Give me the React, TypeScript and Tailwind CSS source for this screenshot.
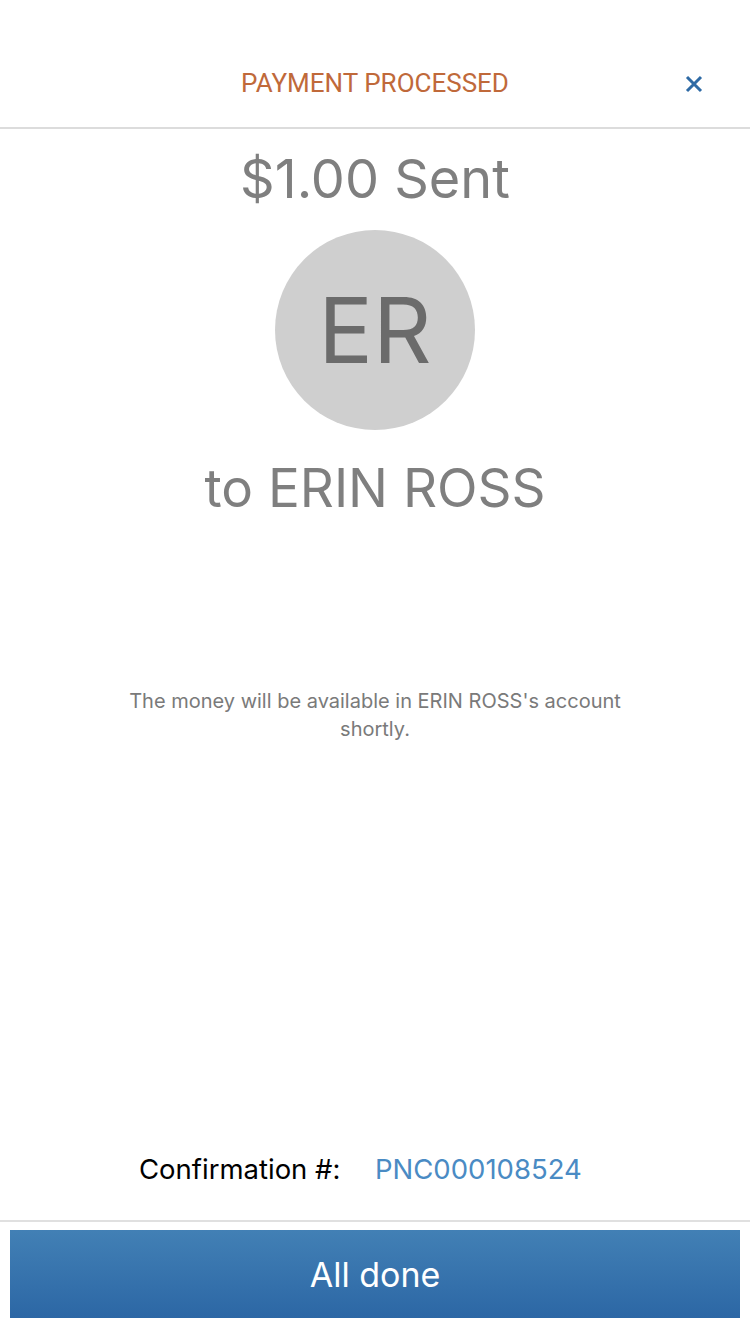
export default function App() {
  return (
    <div className="w-[750px] h-[1334px] bg-white flex flex-col" style={{ fontFamily: 'Inter, Roboto, "Noto Sans", sans-serif' }}>
      <div className="relative h-[129px] shrink-0 flex items-start justify-center pt-[64px] border-b-2 border-[#dcdcdc]">
        <div className="text-[26px] leading-[39px] text-[#c0693a]" style={{ fontFamily: 'Roboto, sans-serif' }}>PAYMENT PROCESSED</div>
        <button className="absolute left-[683px] top-[73px] w-[22px] h-[22px] flex items-center justify-center">
          <svg width="20" height="20" viewBox="0 0 20 20">
            <path d="M3 3 L17 17 M17 3 L3 17" stroke="#2e6aa5" strokeWidth="3" strokeLinecap="butt" />
          </svg>
        </button>
      </div>
      <div className="flex flex-col items-center">
        <div className="text-[54px] leading-[60px] text-[#7f7f7f] mt-[20px]">$1.00 Sent</div>
        <div className="w-[200px] h-[200px] rounded-full bg-[#cfcfcf] flex items-center justify-center mt-[21px]">
          <span className="text-[91px] text-[#6b6b6b] leading-none">ER</span>
        </div>
        <div className="text-[53px] leading-[60px] text-[#7f7f7f] mt-[28px]">to ERIN ROSS</div>
        <div className="text-[20px] leading-[28px] text-[#7a7a7a] text-center w-[530px] mt-[169px]">
          The money will be available in ERIN ROSS's account shortly.
        </div>
      </div>
      <div className="flex-1" />
      <div className="flex items-center justify-center h-[40px] mb-[30px] text-[27.5px]">
        <span className="text-black w-[236px] text-right pr-[38px] whitespace-nowrap">Confirmation #:</span>
        <span className="text-[#4a8bc4] w-[236px] whitespace-nowrap">PNC000108524</span>
      </div>
      <div className="border-t-2 border-[#e0e0e0] pt-[8px] pb-[16px] px-[10px]">
        <button className="w-full h-[88px] bg-gradient-to-b from-[#4280b5] to-[#2c67a5] text-white text-[34px]">
          All done
        </button>
      </div>
    </div>
  );
}
